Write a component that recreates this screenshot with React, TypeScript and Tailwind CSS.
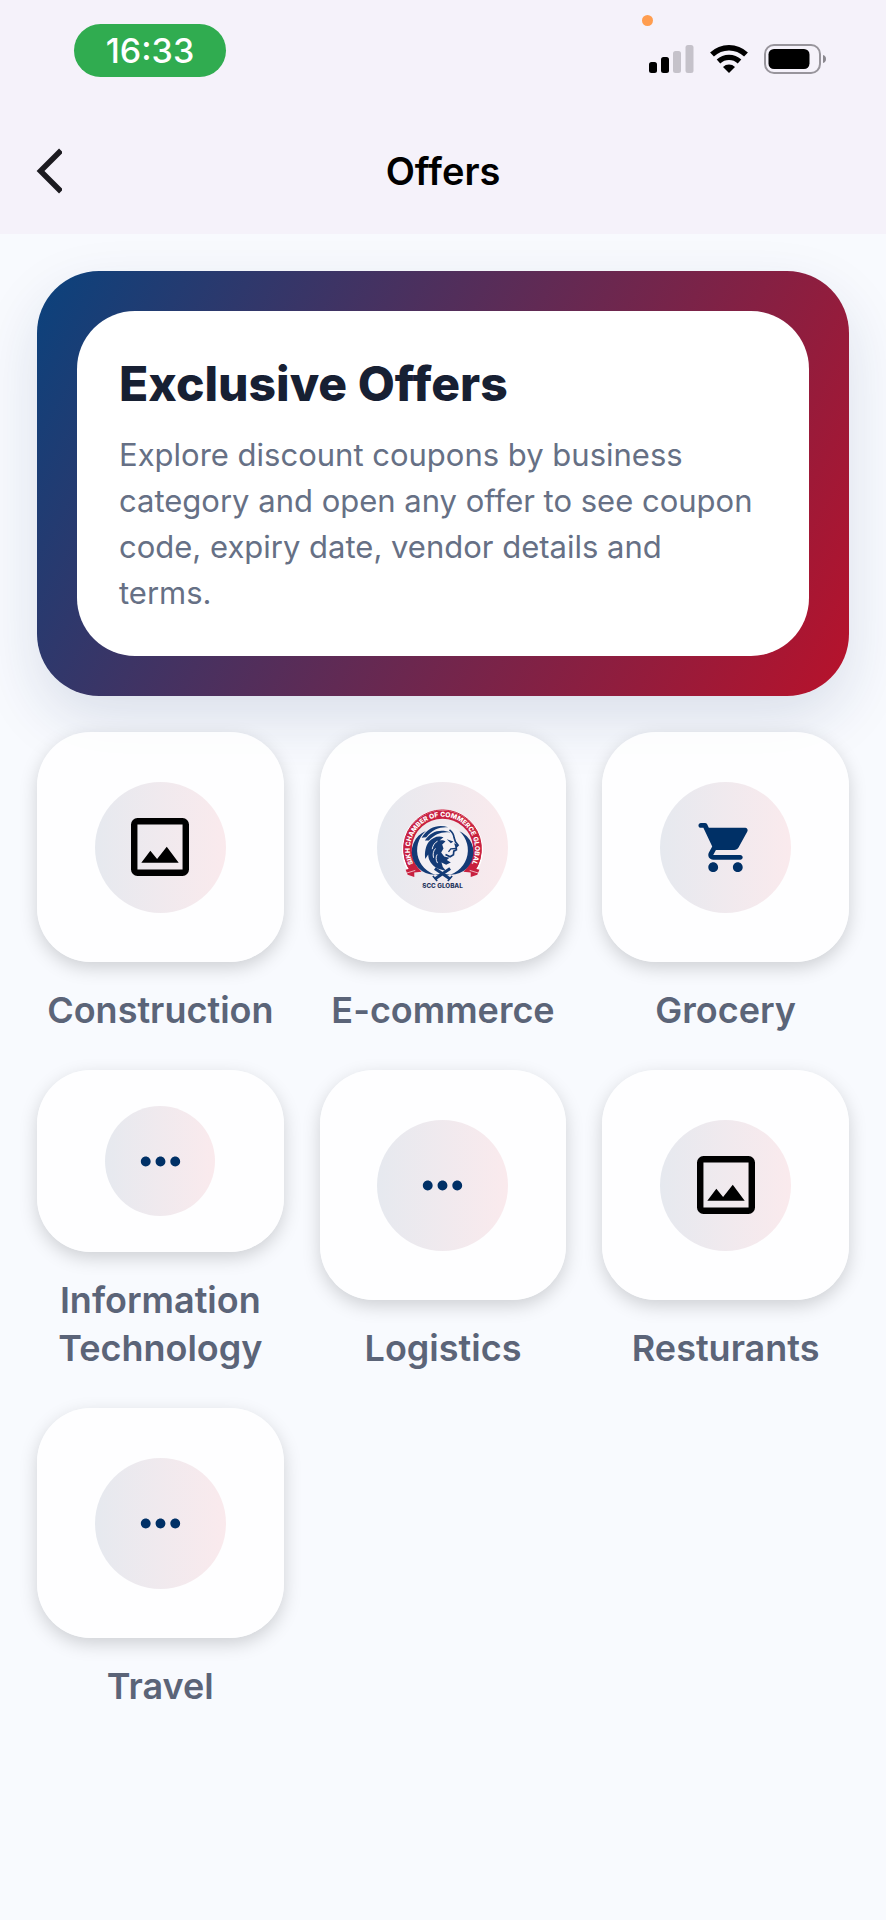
import React from 'react';
import { MdMoreHoriz } from 'react-icons/md';

type Category = {
  name: string;
  icon: React.ReactNode;
};

const ImageIcon: React.FC = () => (
  <svg viewBox="3 3 18 18" className="w-[58px] h-[58px] text-black" fill="currentColor" aria-hidden="true">
    <path fillRule="evenodd" d="M5 3h14a2 2 0 0 1 2 2v14a2 2 0 0 1-2 2H5a2 2 0 0 1-2-2V5a2 2 0 0 1 2-2zm0 2v14h14V5z" />
    <path d="M6.2 16.9 9 13.15l2.1 2.55 3-3.8 3.7 5z" />
  </svg>
);

const CartIcon: React.FC = () => (
  <svg viewBox="0 0 24 24" className="w-[59px] h-[59px] text-[#003066]" fill="currentColor" aria-hidden="true">
    <path d="M7 18c-1.1 0-1.99.9-1.99 2S5.9 22 7 22s2-.9 2-2-.9-2-2-2zM1 3c0 .55.45 1 1 1h1l3.6 7.59-1.35 2.44C4.52 15.37 5.48 17 7 17h11c.55 0 1-.45 1-1s-.45-1-1-1H7l1.1-2h7.45c.75 0 1.41-.41 1.75-1.03l3.58-6.49A.996.996 0 0 0 20.01 4H5.21l-.67-1.43a.993.993 0 0 0-.9-.57H2c-.55 0-1 .45-1 1zm16 15c-1.1 0-1.99.9-1.99 2s.89 2 1.99 2 2-.9 2-2-.9-2-2-2z" />
  </svg>
);

const MoreIcon: React.FC = () => <MdMoreHoriz className="w-[59px] h-[59px] text-[#003066]" aria-hidden="true" />;

const SccLogo: React.FC = () => (
  <svg viewBox="0 0 250 250" className="w-[83px] h-[83px]" fill="none" aria-hidden="true">
    {/* ribbon */}
    <path d="M33 196A112 112 0 1 1 217 196" stroke="#fff" strokeWidth="20" />
    <path d="M30 197A117 117 0 1 1 220 197" stroke="#c8203f" strokeWidth="3" />
    <path d="M39 191A105 105 0 1 1 211 191" stroke="#c8203f" strokeWidth="25" />
    <path d="M14 192 48 182 62 198 40 200 40 214 20 207z" fill="#c8203f" />
    <path d="M236 192 202 182 188 198 210 200 210 214 230 207z" fill="#c8203f" />
    <path d="M17 202 43 194M233 202 207 194" stroke="#fff" strokeWidth="2" />
    <path id="scc-arc" d="M45 187A98 98 0 1 1 205 187" />
    <text fill="#fff" className="font-['Inter'] font-extrabold text-[20px]">
      <textPath href="#scc-arc" startOffset="50%" textAnchor="middle">SIKH CHAMBER OF COMMERCE GLOBAL</textPath>
    </text>
    {/* ring of two blades */}
    <circle cx="125" cy="133" r="77" fill="#f3f0f4" />
    <path d="M75 75A77 77 0 0 0 121 210L127 202A66 66 0 0 1 75 75z" fill="#143b76" />
    <path d="M176 76A77 77 0 0 1 130 210L124 202A68 68 0 0 0 176 76z" fill="#143b76" />
    {/* mane */}
    <path d="M62 96C82 62 114 54 142 64 118 62 94 70 76 94z" fill="#143b76" />
    <path d="M72 104C90 76 118 68 150 80 124 76 102 84 84 104z" fill="#143b76" />
    <path d="M84 108C96 94 112 88 128 94L116 104C122 102 130 103 134 107L124 116 128 128 121 140 130 152 146 156 138 163 150 170 136 177 122 170 126 184 136 196 112 189C92 179 82 163 82 146L73 160C70 138 75 120 84 108z" fill="#143b76" />
    <path d="M94 130C96 118 102 110 110 106M98 156C95 144 98 134 104 128M110 172C104 162 105 152 109 146" stroke="#f3f0f4" strokeWidth="3" />
    {/* face */}
    <path d="M146 72C154 78 159 86 160 96L164 108 172 118 166 124 167 132 159 136 158 147 148 153 134 146" stroke="#143b76" strokeWidth="5" />
    <path d="M138 100 158 107 150 112z" fill="#143b76" />
    <path d="M160 112 171 117 164 124z" fill="#143b76" />
    <path d="M166 128 150 129 143 138" stroke="#143b76" strokeWidth="4" />
    {/* swords */}
    <path d="M102 220 148 188M148 220 102 188" stroke="#143b76" strokeWidth="9" />
    <path d="M96 211 109 226M154 211 141 226" stroke="#143b76" strokeWidth="5" />
    <text x="125" y="247" textAnchor="middle" fill="#27375f" className="font-['Inter'] font-extrabold text-[19px]">SCC GLOBAL</text>
  </svg>
);

const categories: Category[] = [
  { name: 'Construction', icon: <ImageIcon /> },
  { name: 'E-commerce', icon: <SccLogo /> },
  { name: 'Grocery', icon: <CartIcon /> },
  { name: 'Information Technology', icon: <MoreIcon /> },
  { name: 'Logistics', icon: <MoreIcon /> },
  { name: 'Resturants', icon: <ImageIcon /> },
  { name: 'Travel', icon: <MoreIcon /> },
];

const StatusBar: React.FC = () => (
  <div className="relative flex items-start justify-between pl-[74px] pr-[59px] pt-6">
    <div className="w-[152px] h-[53px] rounded-full bg-[#30ac50] flex items-center justify-center text-white text-[34px] font-medium">
      16:33
    </div>
    <span className="absolute top-[15px] right-[233px] w-[11px] h-[11px] rounded-full bg-[#ff9d4f]" />
    <div className="flex items-center gap-4 pt-5">
      <svg width="45" height="30" viewBox="0 0 45 30" aria-hidden="true">
        <rect x="0" y="18" width="8" height="11" rx="2.5" fill="#000" />
        <rect x="12" y="13" width="8" height="16" rx="2.5" fill="#000" />
        <rect x="24" y="7" width="8" height="22" rx="2.5" fill="#c5c2ca" />
        <rect x="36.5" y="1" width="8" height="28" rx="2.5" fill="#c5c2ca" />
      </svg>
      <svg width="38" height="30" viewBox="0 0 38 30" fill="none" aria-hidden="true">
        <path d="M2 10.5a24.5 24.5 0 0 1 34 0" stroke="#000" strokeWidth="5.5" />
        <path d="M8.5 17.5a15.3 15.3 0 0 1 21 0" stroke="#000" strokeWidth="5.2" />
        <path d="M19 29l-6-6a8.6 8.6 0 0 1 12 0z" fill="#000" />
      </svg>
      <svg width="63" height="30" viewBox="0 0 63 30" aria-hidden="true">
        <rect x="1" y="1" width="55" height="28" rx="9" fill="none" stroke="#98959c" strokeWidth="2" />
        <rect x="4.5" y="5" width="41" height="20" rx="5.5" fill="#000" />
        <path d="M59 11c2 .5 3 2 3 4s-1 3.5-3 4z" fill="#8b888f" />
      </svg>
    </div>
  </div>
);

const CategoryTile: React.FC<Category> = ({ name, icon }) => (
  <button type="button" className="h-full flex flex-col items-center gap-6 cursor-pointer">
    <span className="w-full flex-1 min-h-0 flex items-center justify-center py-9 rounded-[54px] bg-white/85 shadow-[0_6px_18px_rgba(0,0,0,0.17)]">
      <span className="h-full max-h-[131px] aspect-square rounded-full flex items-center justify-center bg-linear-to-r from-[#e6e9ef] to-[#faeaed]">
        {icon}
      </span>
    </span>
    <span className="text-[36px] leading-[48px] font-semibold text-[#5b6478] text-center">{name}</span>
  </button>
);

const App: React.FC = () => {
  return (
    <div className="min-h-screen bg-[#f8fafe] font-['Inter',sans-serif]">
      <header className="relative z-10 bg-[#f5f2fa] pb-6">
        <StatusBar />
        <div className="grid grid-cols-[1fr_auto_1fr] items-center px-[36px] pt-[55px]">
          <button type="button" aria-label="Back" className="justify-self-start py-4 cursor-pointer">
            <svg width="26" height="46" viewBox="0 0 26 46" fill="none" aria-hidden="true">
              <path d="M25 2.5 4.5 23 25 43.5" stroke="#1c1b20" strokeWidth="5.5" />
            </svg>
          </button>
          <h1 className="text-[38px] leading-[48px] font-semibold text-black">Offers</h1>
        </div>
      </header>

      <main className="p-[37px] flex flex-col gap-9">
        <section className="rounded-[62px] p-10 bg-[linear-gradient(118deg,#0a427d,#b8122b)] shadow-[0_24px_60px_rgba(20,50,100,0.13)]">
          <div className="rounded-[58px] bg-white px-[42px] pt-[41px] pb-10">
            <h2 className="text-[48px] leading-[64px] font-extrabold text-[#172033]">Exclusive Offers</h2>
            <p className="mt-4 text-[31px] leading-[46px] text-[#667085]">
              Explore discount coupons by business category and open any offer to see coupon code, expiry date, vendor details and
              <br />
              terms.
            </p>
          </div>
        </section>

        <section className="grid grid-cols-3 gap-9 auto-rows-[302px]" aria-label="Offer categories">
          {categories.map((category) => (
            <CategoryTile key={category.name} {...category} />
          ))}
        </section>
      </main>
    </div>
  );
};

export default App;
